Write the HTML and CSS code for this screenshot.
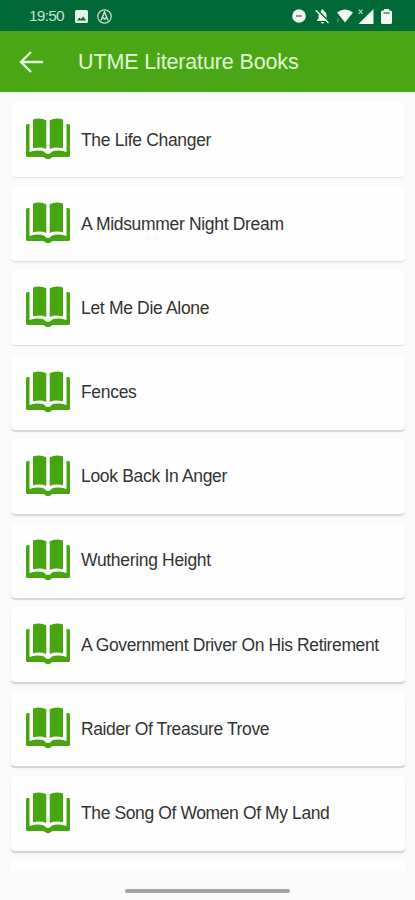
FILE: index.html
```html
<!DOCTYPE html>
<html lang="en">
<head>
<meta charset="utf-8">
<title>UTME Literature Books</title>
<link rel="stylesheet" href="styles.css">
</head>
<body>
<svg class="defs" width="0" height="0" aria-hidden="true">
  <symbol id="book" viewBox="0 0 44 42">
    <path d="M7 1.500Q14-1 20.300 2.300V31Q15 28.600 7 30.300ZM23.700 2.300Q30-1 37 1.500V30.300Q29 28.600 23.700 31Z"/>
    <path d="M0 7.500Q0 6 1.500 6H3.500V34Q12 31.500 18 33.500Q20 36 22 36Q24 36 26 33.500Q32 31.500 40.500 34V6H42.500Q44 6 44 7.500V37.500Q44 39 42.500 39H27.500Q26 39 25 40Q22 42.500 19 40Q18 39 16.500 39H1.500Q0 39 0 37.500Z"/>
  </symbol>
</svg>
<div class="screen">
  <div class="status">
    <span class="clock">19:50</span>
    <svg class="picture" width="13" height="13" viewBox="0 0 13 13"><path fill="currentColor" fill-rule="evenodd" d="M1.500 0H11.500Q13 0 13 1.500V11.500Q13 13 11.500 13H1.500Q0 13 0 11.500V1.500Q0 0 1.500 0ZM2 10.500H11L8.200 6.500L6 9.200L4.500 7.500Z"/></svg>
    <svg class="circled" width="15" height="15" viewBox="0 0 15 15" fill="none" stroke="currentColor"><circle cx="7.500" cy="7.500" r="6.700" stroke-width="1.200"/><path d="M4 11.500L7.500 3L11 11.500M5.500 8.700L7.500 10L9.500 8.700" stroke-width="1.500"/></svg>
    <svg class="dnd" width="14" height="14" viewBox="0 0 14 14"><circle cx="7" cy="7" r="6.800" fill="currentColor"/><path d="M4 7H10" stroke="#5f8f78" stroke-width="1.700"/></svg>
    <svg class="bell" width="15" height="15" viewBox="0 0 15 15"><path fill="currentColor" d="M2 12V11L3.500 9.500V6Q3.500 3 6.300 2.200V1Q7.500-.3 8.700 1V2.200Q11.500 3 11.500 6V9.500L13 11V12ZM6 13H9Q8.800 14.500 7.500 14.500Q6.200 14.500 6 13Z"/><path d="M2 .5L14.500 13" stroke="#006936" stroke-width="1.500"/><path d="M.7 1.200L13.500 14" stroke="currentColor" stroke-width="1.300"/></svg>
    <svg class="wifi" width="16" height="14" viewBox="0 0 16 14"><path fill="currentColor" d="M0 3.500Q8-2.700 16 3.500L8 13.500Z"/><path d="M1 9.500V13" stroke="currentColor" opacity=".5"/></svg>
    <svg class="signal" width="16" height="15" viewBox="0 0 16 15"><path fill="currentColor" d="M15.500 0V15H.5Z"/><path d="M.7.7L4.500 5M4.500.7L.7 5" stroke="currentColor" stroke-width="1.100" opacity=".8"/></svg>
    <svg class="battery" width="11" height="15" viewBox="0 0 11 15"><path fill="currentColor" d="M3 0H8V1.500H9.500Q11 1.500 11 3V13.500Q11 15 9.500 15H1.500Q0 15 0 13.500V3Q0 1.500 1.500 1.500H3Z"/><path d="M2.500 4H8.500" stroke="#4c8063" stroke-width="1.500"/></svg>
  </div>
  <header class="appbar">
    <svg class="back" width="25" height="22" viewBox="0 0 25 22"><path d="M24 11H2M12 1L2 11L12 21" fill="none" stroke="currentColor" stroke-width="2.400"/></svg>
    <h1 class="title">UTME Literature Books</h1>
  </header>
  <main class="list">
    <div class="card s1"><svg class="book"><use href="#book"/></svg><span class="name">The Life Changer</span></div>
    <div class="card s2"><svg class="book"><use href="#book"/></svg><span class="name">A Midsummer Night Dream</span></div>
    <div class="card s2"><svg class="book"><use href="#book"/></svg><span class="name">Let Me Die Alone</span></div>
    <div class="card s3"><svg class="book"><use href="#book"/></svg><span class="name">Fences</span></div>
    <div class="card s3"><svg class="book"><use href="#book"/></svg><span class="name">Look Back In Anger</span></div>
    <div class="card s3"><svg class="book"><use href="#book"/></svg><span class="name">Wuthering Height</span></div>
    <div class="card s4"><svg class="book"><use href="#book"/></svg><span class="name tight">A Government Driver On His Retirement</span></div>
    <div class="card s4"><svg class="book"><use href="#book"/></svg><span class="name tight">Raider Of Treasure Trove</span></div>
    <div class="card s4"><svg class="book"><use href="#book"/></svg><span class="name tight">The Song Of Women Of My Land</span></div>
    <div class="card"></div>
  </main>
  <footer class="nav"><div class="handle"></div></footer>
</div>
</body>
</html>
```
FILE: styles.css
```css
* { box-sizing: border-box; }
body { margin: 0; font-family: "Liberation Sans", Arial, sans-serif; background: #fafafa; }
svg { display: block; flex: none; }
.defs { position: absolute; }
.screen { width: 415px; height: 900px; display: flex; flex-direction: column; overflow: hidden; }
.status { height: 31px; flex: none; background: #006936; color: #f0faf3; display: flex; align-items: center; padding: 1px 23px 0 29px; }
.clock { width: 46px; font-size: 15.5px; letter-spacing: -0.8px; color: #c3e2cf; }
.picture { color: #e2f3e9; }
.circled { margin-left: 9px; color: #c3e2cf; }
.dnd { margin-left: auto; }
.bell { margin-left: 9px; }
.wifi { margin-left: 7px; }
.signal { margin-left: 5px; }
.battery { margin-left: 7px; }
.appbar { height: 61px; flex: none; background: #4aa614; color: #e3f7d5; display: flex; align-items: center; padding-left: 19px; box-shadow: 0 1px 2px #0001; }
.title { margin: 2px 0 0 34px; font-size: 21.5px; font-weight: 400; letter-spacing: -0.14px; white-space: nowrap; }
.list { height: 779px; flex: none; padding: 10px 10px 0 11px; display: flex; flex-direction: column; gap: 9.2px; overflow: hidden; }
.card { height: 75px; flex: none; display: flex; align-items: center; padding: 0 0 0 15px; background: #fefefe; border-radius: 4px; font-size: 17.5px; letter-spacing: -0.32px; color: #333; white-space: nowrap; }
.book { width: 44px; height: 42px; margin: 0 11px 1px 0; fill: #46a511; }
.name { padding-top: 1px; }
.tight { letter-spacing: -0.39px; }
.s1 { box-shadow: 0 1px 1px #00000014, 0 1px 4px #00000006; }
.s2 { box-shadow: 0 1px 1px #0000001a, 0 1px 4px #00000006; }
.s3 { box-shadow: 0 1.5px 1px #0000001e, 0 2px 4px #00000006; }
.s4 { box-shadow: 0 2px 1px #00000024, 0 2px 4px #00000008; }
.nav { flex: 1; display: flex; justify-content: center; padding-top: 18px; }
.handle { width: 165px; height: 4px; border-radius: 2px; background: #a2a2a2; }
```
